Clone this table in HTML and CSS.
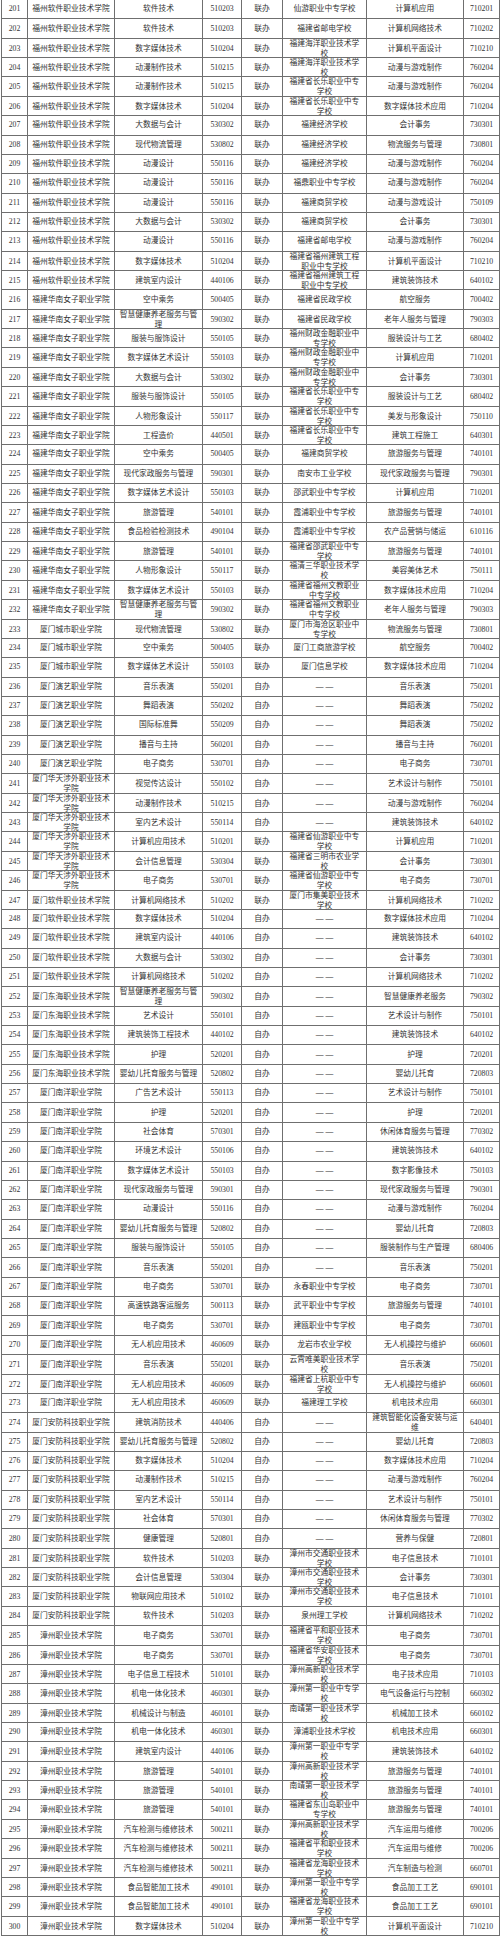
FILE: index.html
```html
<!DOCTYPE html>
<html lang="zh-CN">
<head>
<meta charset="utf-8">
<title>专业对照表</title>
<link rel="stylesheet" href="styles.css">
</head>
<body>
<div class="tbl">
<div class="row"><span>201</span><span>福州软件职业技术学院</span><span>软件技术</span><span>510203</span><span>联办</span><span>仙游职业中专学校</span><span>计算机应用</span><span>710201</span></div>
<div class="row"><span>202</span><span>福州软件职业技术学院</span><span>软件技术</span><span>510203</span><span>联办</span><span>福建省邮电学校</span><span>计算机网络技术</span><span>710202</span></div>
<div class="row"><span>203</span><span>福州软件职业技术学院</span><span>数字媒体技术</span><span>510204</span><span>联办</span><span>福建海洋职业技术学校</span><span>计算机平面设计</span><span>710210</span></div>
<div class="row"><span>204</span><span>福州软件职业技术学院</span><span>动漫制作技术</span><span>510215</span><span>联办</span><span>福建海洋职业技术学校</span><span>动漫与游戏制作</span><span>760204</span></div>
<div class="row"><span>205</span><span>福州软件职业技术学院</span><span>动漫制作技术</span><span>510215</span><span>联办</span><span>福建省长乐职业中专学校</span><span>动漫与游戏制作</span><span>760204</span></div>
<div class="row"><span>206</span><span>福州软件职业技术学院</span><span>数字媒体技术</span><span>510204</span><span>联办</span><span>福建省长乐职业中专学校</span><span>数字媒体技术应用</span><span>710204</span></div>
<div class="row"><span>207</span><span>福州软件职业技术学院</span><span>大数据与会计</span><span>530302</span><span>联办</span><span>福建经济学校</span><span>会计事务</span><span>730301</span></div>
<div class="row"><span>208</span><span>福州软件职业技术学院</span><span>现代物流管理</span><span>530802</span><span>联办</span><span>福建经济学校</span><span>物流服务与管理</span><span>730801</span></div>
<div class="row"><span>209</span><span>福州软件职业技术学院</span><span>动漫设计</span><span>550116</span><span>联办</span><span>福建经济学校</span><span>动漫与游戏制作</span><span>760204</span></div>
<div class="row"><span>210</span><span>福州软件职业技术学院</span><span>动漫设计</span><span>550116</span><span>联办</span><span>福鼎职业中专学校</span><span>动漫与游戏制作</span><span>760204</span></div>
<div class="row"><span>211</span><span>福州软件职业技术学院</span><span>动漫设计</span><span>550116</span><span>联办</span><span>福建商贸学校</span><span>动漫与游戏设计</span><span>750109</span></div>
<div class="row"><span>212</span><span>福州软件职业技术学院</span><span>大数据与会计</span><span>530302</span><span>联办</span><span>福建商贸学校</span><span>会计事务</span><span>730301</span></div>
<div class="row"><span>213</span><span>福州软件职业技术学院</span><span>动漫设计</span><span>550116</span><span>联办</span><span>福建省邮电学校</span><span>动漫与游戏制作</span><span>760204</span></div>
<div class="row"><span>214</span><span>福州软件职业技术学院</span><span>数字媒体技术</span><span>510204</span><span>联办</span><span>福建省福州建筑工程职业中专学校</span><span>计算机平面设计</span><span>710210</span></div>
<div class="row"><span>215</span><span>福州软件职业技术学院</span><span>建筑室内设计</span><span>440106</span><span>联办</span><span>福建省福州建筑工程职业中专学校</span><span>建筑装饰技术</span><span>640102</span></div>
<div class="row"><span>216</span><span>福建华南女子职业学院</span><span>空中乘务</span><span>500405</span><span>联办</span><span>福建省民政学校</span><span>航空服务</span><span>700402</span></div>
<div class="row"><span>217</span><span>福建华南女子职业学院</span><span>智慧健康养老服务与管理</span><span>590302</span><span>联办</span><span>福建省民政学校</span><span>老年人服务与管理</span><span>790303</span></div>
<div class="row"><span>218</span><span>福建华南女子职业学院</span><span>服装与服饰设计</span><span>550105</span><span>联办</span><span>福州财政金融职业中专学校</span><span>服装设计与工艺</span><span>680402</span></div>
<div class="row"><span>219</span><span>福建华南女子职业学院</span><span>数字媒体艺术设计</span><span>550103</span><span>联办</span><span>福州财政金融职业中专学校</span><span>计算机应用</span><span>710201</span></div>
<div class="row"><span>220</span><span>福建华南女子职业学院</span><span>大数据与会计</span><span>530302</span><span>联办</span><span>福州财政金融职业中专学校</span><span>会计事务</span><span>730301</span></div>
<div class="row"><span>221</span><span>福建华南女子职业学院</span><span>服装与服饰设计</span><span>550105</span><span>联办</span><span>福建省长乐职业中专学校</span><span>服装设计与工艺</span><span>680402</span></div>
<div class="row"><span>222</span><span>福建华南女子职业学院</span><span>人物形象设计</span><span>550117</span><span>联办</span><span>福建省长乐职业中专学校</span><span>美发与形象设计</span><span>750110</span></div>
<div class="row"><span>223</span><span>福建华南女子职业学院</span><span>工程造价</span><span>440501</span><span>联办</span><span>福建省长乐职业中专学校</span><span>建筑工程施工</span><span>640301</span></div>
<div class="row"><span>224</span><span>福建华南女子职业学院</span><span>空中乘务</span><span>500405</span><span>联办</span><span>福建商贸学校</span><span>旅游服务与管理</span><span>740101</span></div>
<div class="row"><span>225</span><span>福建华南女子职业学院</span><span>现代家政服务与管理</span><span>590301</span><span>联办</span><span>南安市工业学校</span><span>现代家政服务与管理</span><span>790301</span></div>
<div class="row"><span>226</span><span>福建华南女子职业学院</span><span>数字媒体艺术设计</span><span>550103</span><span>联办</span><span>邵武职业中专学校</span><span>计算机应用</span><span>710201</span></div>
<div class="row"><span>227</span><span>福建华南女子职业学院</span><span>旅游管理</span><span>540101</span><span>联办</span><span>霞浦职业中专学校</span><span>旅游服务与管理</span><span>740101</span></div>
<div class="row"><span>228</span><span>福建华南女子职业学院</span><span>食品检验检测技术</span><span>490104</span><span>联办</span><span>霞浦职业中专学校</span><span>农产品营销与储运</span><span>610116</span></div>
<div class="row"><span>229</span><span>福建华南女子职业学院</span><span>旅游管理</span><span>540101</span><span>联办</span><span>福建省邵武职业中专学校</span><span>旅游服务与管理</span><span>740101</span></div>
<div class="row"><span>230</span><span>福建华南女子职业学院</span><span>人物形象设计</span><span>550117</span><span>联办</span><span>福清三华职业技术学校</span><span>美容美体艺术</span><span>750111</span></div>
<div class="row"><span>231</span><span>福建华南女子职业学院</span><span>数字媒体艺术设计</span><span>550103</span><span>联办</span><span>福建省福州文教职业中专学校</span><span>数字媒体技术应用</span><span>710204</span></div>
<div class="row"><span>232</span><span>福建华南女子职业学院</span><span>智慧健康养老服务与管理</span><span>590302</span><span>联办</span><span>福建省福州文教职业中专学校</span><span>老年人服务与管理</span><span>790303</span></div>
<div class="row"><span>233</span><span>厦门城市职业学院</span><span>现代物流管理</span><span>530802</span><span>联办</span><span>厦门市海沧区职业中专学校</span><span>物流服务与管理</span><span>730801</span></div>
<div class="row"><span>234</span><span>厦门城市职业学院</span><span>空中乘务</span><span>500405</span><span>联办</span><span>厦门工商旅游学校</span><span>航空服务</span><span>700402</span></div>
<div class="row"><span>235</span><span>厦门城市职业学院</span><span>数字媒体艺术设计</span><span>550103</span><span>联办</span><span>厦门信息学校</span><span>数字媒体技术应用</span><span>710204</span></div>
<div class="row"><span>236</span><span>厦门演艺职业学院</span><span>音乐表演</span><span>550201</span><span>自办</span><span>— —</span><span>音乐表演</span><span>750201</span></div>
<div class="row"><span>237</span><span>厦门演艺职业学院</span><span>舞蹈表演</span><span>550202</span><span>自办</span><span>— —</span><span>舞蹈表演</span><span>750202</span></div>
<div class="row"><span>238</span><span>厦门演艺职业学院</span><span>国际标准舞</span><span>550209</span><span>自办</span><span>— —</span><span>舞蹈表演</span><span>750202</span></div>
<div class="row"><span>239</span><span>厦门演艺职业学院</span><span>播音与主持</span><span>560201</span><span>自办</span><span>— —</span><span>播音与主持</span><span>760201</span></div>
<div class="row"><span>240</span><span>厦门演艺职业学院</span><span>电子商务</span><span>530701</span><span>自办</span><span>— —</span><span>电子商务</span><span>730701</span></div>
<div class="row"><span>241</span><span>厦门华天涉外职业技术学院</span><span>视觉传达设计</span><span>550102</span><span>自办</span><span>— —</span><span>艺术设计与制作</span><span>750101</span></div>
<div class="row"><span>242</span><span>厦门华天涉外职业技术学院</span><span>动漫制作技术</span><span>510215</span><span>自办</span><span>— —</span><span>动漫与游戏制作</span><span>760204</span></div>
<div class="row"><span>243</span><span>厦门华天涉外职业技术学院</span><span>室内艺术设计</span><span>550114</span><span>自办</span><span>— —</span><span>建筑装饰技术</span><span>640102</span></div>
<div class="row"><span>244</span><span>厦门华天涉外职业技术学院</span><span>计算机应用技术</span><span>510201</span><span>联办</span><span>福建省仙游职业中专学校</span><span>计算机应用</span><span>710201</span></div>
<div class="row"><span>245</span><span>厦门华天涉外职业技术学院</span><span>会计信息管理</span><span>530304</span><span>联办</span><span>福建省三明市农业学校</span><span>会计事务</span><span>730301</span></div>
<div class="row"><span>246</span><span>厦门华天涉外职业技术学院</span><span>电子商务</span><span>530701</span><span>联办</span><span>福建省仙游职业中专学校</span><span>电子商务</span><span>730701</span></div>
<div class="row"><span>247</span><span>厦门软件职业技术学院</span><span>计算机网络技术</span><span>510202</span><span>联办</span><span>厦门市集美职业技术学校</span><span>计算机网络技术</span><span>710202</span></div>
<div class="row"><span>248</span><span>厦门软件职业技术学院</span><span>数字媒体技术</span><span>510204</span><span>自办</span><span>— —</span><span>数字媒体技术应用</span><span>710204</span></div>
<div class="row"><span>249</span><span>厦门软件职业技术学院</span><span>建筑室内设计</span><span>440106</span><span>自办</span><span>— —</span><span>建筑装饰技术</span><span>640102</span></div>
<div class="row"><span>250</span><span>厦门软件职业技术学院</span><span>大数据与会计</span><span>530302</span><span>自办</span><span>— —</span><span>会计事务</span><span>730301</span></div>
<div class="row"><span>251</span><span>厦门软件职业技术学院</span><span>计算机网络技术</span><span>510202</span><span>自办</span><span>— —</span><span>计算机网络技术</span><span>710202</span></div>
<div class="row"><span>252</span><span>厦门东海职业技术学院</span><span>智慧健康养老服务与管理</span><span>590302</span><span>自办</span><span>— —</span><span>智慧健康养老服务</span><span>790302</span></div>
<div class="row"><span>253</span><span>厦门东海职业技术学院</span><span>艺术设计</span><span>550101</span><span>自办</span><span>— —</span><span>艺术设计与制作</span><span>750101</span></div>
<div class="row"><span>254</span><span>厦门东海职业技术学院</span><span>建筑装饰工程技术</span><span>440102</span><span>自办</span><span>— —</span><span>建筑装饰技术</span><span>640102</span></div>
<div class="row"><span>255</span><span>厦门东海职业技术学院</span><span>护理</span><span>520201</span><span>自办</span><span>— —</span><span>护理</span><span>720201</span></div>
<div class="row"><span>256</span><span>厦门东海职业技术学院</span><span>婴幼儿托育服务与管理</span><span>520802</span><span>自办</span><span>— —</span><span>婴幼儿托育</span><span>720803</span></div>
<div class="row"><span>257</span><span>厦门南洋职业学院</span><span>广告艺术设计</span><span>550113</span><span>自办</span><span>— —</span><span>艺术设计与制作</span><span>750101</span></div>
<div class="row"><span>258</span><span>厦门南洋职业学院</span><span>护理</span><span>520201</span><span>自办</span><span>— —</span><span>护理</span><span>720201</span></div>
<div class="row"><span>259</span><span>厦门南洋职业学院</span><span>社会体育</span><span>570301</span><span>自办</span><span>— —</span><span>休闲体育服务与管理</span><span>770302</span></div>
<div class="row"><span>260</span><span>厦门南洋职业学院</span><span>环境艺术设计</span><span>550106</span><span>自办</span><span>— —</span><span>建筑装饰技术</span><span>640102</span></div>
<div class="row"><span>261</span><span>厦门南洋职业学院</span><span>数字媒体艺术设计</span><span>550103</span><span>自办</span><span>— —</span><span>数字影像技术</span><span>750103</span></div>
<div class="row"><span>262</span><span>厦门南洋职业学院</span><span>现代家政服务与管理</span><span>590301</span><span>自办</span><span>— —</span><span>现代家政服务与管理</span><span>790301</span></div>
<div class="row"><span>263</span><span>厦门南洋职业学院</span><span>动漫设计</span><span>550116</span><span>自办</span><span>— —</span><span>动漫与游戏制作</span><span>760204</span></div>
<div class="row"><span>264</span><span>厦门南洋职业学院</span><span>婴幼儿托育服务与管理</span><span>520802</span><span>自办</span><span>— —</span><span>婴幼儿托育</span><span>720803</span></div>
<div class="row"><span>265</span><span>厦门南洋职业学院</span><span>服装与服饰设计</span><span>550105</span><span>自办</span><span>— —</span><span>服装制作与生产管理</span><span>680406</span></div>
<div class="row"><span>266</span><span>厦门南洋职业学院</span><span>音乐表演</span><span>550201</span><span>自办</span><span>— —</span><span>音乐表演</span><span>750201</span></div>
<div class="row"><span>267</span><span>厦门南洋职业学院</span><span>电子商务</span><span>530701</span><span>联办</span><span>永春职业中专学校</span><span>电子商务</span><span>730701</span></div>
<div class="row"><span>268</span><span>厦门南洋职业学院</span><span>高速铁路客运服务</span><span>500113</span><span>联办</span><span>武平职业中专学校</span><span>旅游服务与管理</span><span>740101</span></div>
<div class="row"><span>269</span><span>厦门南洋职业学院</span><span>电子商务</span><span>530701</span><span>联办</span><span>建瓯职业中专学校</span><span>电子商务</span><span>730701</span></div>
<div class="row"><span>270</span><span>厦门南洋职业学院</span><span>无人机应用技术</span><span>460609</span><span>联办</span><span>龙岩市农业学校</span><span>无人机操控与维护</span><span>660601</span></div>
<div class="row"><span>271</span><span>厦门南洋职业学院</span><span>音乐表演</span><span>550201</span><span>联办</span><span>云霄唯美职业技术学校</span><span>音乐表演</span><span>750201</span></div>
<div class="row"><span>272</span><span>厦门南洋职业学院</span><span>无人机应用技术</span><span>460609</span><span>联办</span><span>福建省上杭职业中专学校</span><span>无人机操控与维护</span><span>660601</span></div>
<div class="row"><span>273</span><span>厦门南洋职业学院</span><span>无人机应用技术</span><span>460609</span><span>联办</span><span>福建理工学校</span><span>机电技术应用</span><span>660301</span></div>
<div class="row"><span>274</span><span>厦门安防科技职业学院</span><span>建筑消防技术</span><span>440406</span><span>自办</span><span>— —</span><span>建筑智能化设备安装与运维</span><span>640401</span></div>
<div class="row"><span>275</span><span>厦门安防科技职业学院</span><span>婴幼儿托育服务与管理</span><span>520802</span><span>自办</span><span>— —</span><span>婴幼儿托育</span><span>720803</span></div>
<div class="row"><span>276</span><span>厦门安防科技职业学院</span><span>数字媒体技术</span><span>510204</span><span>自办</span><span>— —</span><span>数字媒体技术应用</span><span>710204</span></div>
<div class="row"><span>277</span><span>厦门安防科技职业学院</span><span>动漫制作技术</span><span>510215</span><span>自办</span><span>— —</span><span>动漫与游戏制作</span><span>760204</span></div>
<div class="row"><span>278</span><span>厦门安防科技职业学院</span><span>室内艺术设计</span><span>550114</span><span>自办</span><span>— —</span><span>艺术设计与制作</span><span>750101</span></div>
<div class="row"><span>279</span><span>厦门安防科技职业学院</span><span>社会体育</span><span>570301</span><span>自办</span><span>— —</span><span>休闲体育服务与管理</span><span>770302</span></div>
<div class="row"><span>280</span><span>厦门安防科技职业学院</span><span>健康管理</span><span>520801</span><span>自办</span><span>— —</span><span>营养与保健</span><span>720801</span></div>
<div class="row"><span>281</span><span>厦门安防科技职业学院</span><span>软件技术</span><span>510203</span><span>联办</span><span>漳州市交通职业技术学校</span><span>电子信息技术</span><span>710101</span></div>
<div class="row"><span>282</span><span>厦门安防科技职业学院</span><span>会计信息管理</span><span>530304</span><span>联办</span><span>漳州市交通职业技术学校</span><span>会计事务</span><span>730301</span></div>
<div class="row"><span>283</span><span>厦门安防科技职业学院</span><span>物联网应用技术</span><span>510102</span><span>联办</span><span>漳州市交通职业技术学校</span><span>电子信息技术</span><span>710101</span></div>
<div class="row"><span>284</span><span>厦门安防科技职业学院</span><span>软件技术</span><span>510203</span><span>联办</span><span>泉州理工学校</span><span>计算机网络技术</span><span>710202</span></div>
<div class="row"><span>285</span><span>漳州职业技术学院</span><span>电子商务</span><span>530701</span><span>联办</span><span>福建省平和职业技术学校</span><span>电子商务</span><span>730701</span></div>
<div class="row"><span>286</span><span>漳州职业技术学院</span><span>电子商务</span><span>530701</span><span>联办</span><span>福建省华安职业技术学校</span><span>电子商务</span><span>730701</span></div>
<div class="row"><span>287</span><span>漳州职业技术学院</span><span>电子信息工程技术</span><span>510101</span><span>联办</span><span>漳州高新职业技术学校</span><span>电子技术应用</span><span>710103</span></div>
<div class="row"><span>288</span><span>漳州职业技术学院</span><span>机电一体化技术</span><span>460301</span><span>联办</span><span>漳州第一职业中专学校</span><span>电气设备运行与控制</span><span>660302</span></div>
<div class="row"><span>289</span><span>漳州职业技术学院</span><span>机械设计与制造</span><span>460101</span><span>联办</span><span>南靖第一职业技术学校</span><span>机械加工技术</span><span>660102</span></div>
<div class="row"><span>290</span><span>漳州职业技术学院</span><span>机电一体化技术</span><span>460301</span><span>联办</span><span>漳浦职业技术学校</span><span>机电技术应用</span><span>660301</span></div>
<div class="row"><span>291</span><span>漳州职业技术学院</span><span>建筑室内设计</span><span>440106</span><span>联办</span><span>漳州第一职业中专学校</span><span>建筑装饰技术</span><span>640102</span></div>
<div class="row"><span>292</span><span>漳州职业技术学院</span><span>旅游管理</span><span>540101</span><span>联办</span><span>漳州高新职业技术学校</span><span>旅游服务与管理</span><span>740101</span></div>
<div class="row"><span>293</span><span>漳州职业技术学院</span><span>旅游管理</span><span>540101</span><span>联办</span><span>南靖第一职业技术学校</span><span>旅游服务与管理</span><span>740101</span></div>
<div class="row"><span>294</span><span>漳州职业技术学院</span><span>旅游管理</span><span>540101</span><span>联办</span><span>福建省东山岛职业中专学校</span><span>旅游服务与管理</span><span>740101</span></div>
<div class="row"><span>295</span><span>漳州职业技术学院</span><span>汽车检测与维修技术</span><span>500211</span><span>联办</span><span>漳州高新职业技术学校</span><span>汽车运用与维修</span><span>700206</span></div>
<div class="row"><span>296</span><span>漳州职业技术学院</span><span>汽车检测与维修技术</span><span>500211</span><span>联办</span><span>福建省平和职业技术学校</span><span>汽车运用与维修</span><span>700206</span></div>
<div class="row"><span>297</span><span>漳州职业技术学院</span><span>汽车检测与维修技术</span><span>500211</span><span>联办</span><span>福建省龙海职业技术学校</span><span>汽车制造与检测</span><span>660701</span></div>
<div class="row"><span>298</span><span>漳州职业技术学院</span><span>食品智能加工技术</span><span>490101</span><span>联办</span><span>漳州第一职业中专学校</span><span>食品加工工艺</span><span>690101</span></div>
<div class="row"><span>299</span><span>漳州职业技术学院</span><span>食品智能加工技术</span><span>490101</span><span>联办</span><span>福建省龙海职业技术学校</span><span>食品加工工艺</span><span>690101</span></div>
<div class="row"><span>300</span><span>漳州职业技术学院</span><span>数字媒体技术</span><span>510204</span><span>联办</span><span>漳州第一职业中专学校</span><span>计算机平面设计</span><span>710210</span></div>
</div>
</body>
</html>
```

FILE: styles.css
```css
html, body {
  margin: 0;
  padding: 0;
  background: #ffffff;
}

.tbl {
  margin-left: 1px;
  width: 499px;
  border-left: 1px solid #6f6f6f;
  box-sizing: border-box;
  font-family: "Liberation Serif", "Noto Sans CJK SC", serif;
  font-size: 7.75px;
  line-height: 10px;
  color: #333333;
}

.row {
  display: grid;
  grid-template-columns: 26px 87px 88px 39px 41px 84px 97px 36px;
  height: 19.37px;
  box-sizing: border-box;
  border-bottom: 1px solid #6f6f6f;
}

.row > span {
  display: flex;
  align-items: center;
  justify-content: center;
  text-align: center;
  box-sizing: border-box;
  padding: 0 3px;
  border-right: 1px solid #6f6f6f;
  min-width: 0;
}

.row > span:nth-child(1),
.row > span:nth-child(8) {
  padding: 0;
}

.row > span:nth-child(6) {
  padding: 0 4px;
}
```
